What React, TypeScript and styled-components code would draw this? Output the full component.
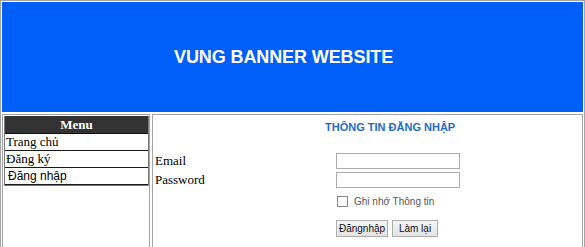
import React from 'react';
import styled, { createGlobalStyle } from 'styled-components';

const GlobalStyle = createGlobalStyle`
  html, body {
    margin: 0;
    padding: 0;
    background: #ffffff;
  }
  body {
    font-family: "Liberation Serif", "Times New Roman", serif;
  }
`;

const Page = styled.div`
  box-sizing: border-box;
  width: 585px;
  height: 247px;
  overflow: hidden;
  border: 1px solid #a3a3a3;
  border-bottom: none;
  padding: 1px 1px 0 1px;
`;

const Banner = styled.div`
  height: 110px;
  background: #005ef9;
  display: flex;
  align-items: center;
  padding-left: 172px;
  color: #ffffff;
  font-family: "Liberation Sans", Arial, sans-serif;
  font-weight: bold;
  font-size: 18px;
  letter-spacing: -0.1px;
`;

const Body = styled.div`
  display: flex;
  gap: 2px;
  margin-top: 2px;
  height: 140px;
`;

const SideCell = styled.div`
  box-sizing: border-box;
  width: 148px;
  border: 1px solid #a3a3a3;
  border-bottom: none;
  padding: 1px 0 0 1px;
`;

const Menu = styled.div`
  border: 1px solid #7a7a7a;
  border-top: none;
  width: 145px;
  box-sizing: border-box;
`;

const MenuHeader = styled.div`
  height: 17px;
  line-height: 17px;
  background: #333333;
  color: #ffffff;
  text-align: center;
  font-weight: bold;
  font-size: 13px;
  border-bottom: 1px solid #111;
`;

const MenuItem = styled.div<{ $sans?: boolean }>`
  height: 16px;
  line-height: 16px;
  padding-left: ${p => (p.$sans ? '3px' : '1px')};
  border-bottom: 1px solid #1a1a1a;
  color: #000;
  font-size: ${p => (p.$sans ? '12px' : '13px')};
  font-family: ${p => (p.$sans ? '"Liberation Sans", Arial, sans-serif' : '"Liberation Serif", "Times New Roman", serif')};
`;

const MainCell = styled.div`
  box-sizing: border-box;
  flex: 1;
  border: 1px solid #a3a3a3;
  border-bottom: none;
`;

const Title = styled.div`
  margin: 6px 0 0 172px;
  height: 13px;
  line-height: 13px;
  color: #1f6ad0;
  font-family: "Liberation Sans", Arial, sans-serif;
  font-weight: bold;
  font-size: 11px;
`;

const Form = styled.div`
  display: grid;
  grid-template-columns: 183px 1fr;
  row-gap: 1px;
  margin-top: 18px;
  align-items: center;
`;

const Label = styled.label`
  padding-left: 2px;
  line-height: 18px;
  font-size: 13px;
  color: #000;
`;

const Input = styled.input`
  box-sizing: border-box;
  width: 124px;
  height: 16px;
  margin: 0;
  border: 1px solid #ababab;
  background: #fff;
  padding: 0 2px;
`;

const CheckRow = styled.div`
  grid-column: 2;
  display: flex;
  align-items: center;
  gap: 6px;
  margin-top: 6px;
  font-family: "Liberation Sans", Arial, sans-serif;
  font-size: 10px;
  color: #555;
`;

const CheckBox = styled.span`
  display: inline-block;
  box-sizing: border-box;
  width: 11px;
  height: 11px;
  border: 1px solid #8a8a8a;
  background: #fff;
  margin-left: 1px;
`;

const ButtonRow = styled.div`
  grid-column: 2;
  display: flex;
  gap: 4px;
  margin-top: 12px;
`;

const Button = styled.button<{ $w: number }>`
  box-sizing: border-box;
  width: ${p => p.$w}px;
  height: 17px;
  padding: 0;
  margin: 0;
  border: 1px solid #adadad;
  background: linear-gradient(#f6f6f6, #e3e3e3);
  font-family: "Liberation Sans", Arial, sans-serif;
  font-size: 10px;
  color: #111;
`;

const Spacer = styled.div``;

export default function App() {
  return (
    <>
      <GlobalStyle />
      <Page>
        <Banner>VUNG BANNER WEBSITE</Banner>
        <Body>
          <SideCell>
            <Menu>
              <MenuHeader>Menu</MenuHeader>
              <MenuItem>Trang chủ</MenuItem>
              <MenuItem>Đăng ký</MenuItem>
              <MenuItem $sans>Đăng nhập</MenuItem>
            </Menu>
          </SideCell>
          <MainCell>
            <Title>THÔNG TIN ĐĂNG NHẬP</Title>
            <Form>
              <Label>Email</Label>
              <Input type="text" />
              <Label>Password</Label>
              <Input type="password" />
              <Spacer />
              <CheckRow>
                <CheckBox />
                Ghi nhớ Thông tin
              </CheckRow>
              <Spacer />
              <ButtonRow>
                <Button $w={52}>Đăngnhập</Button>
                <Button $w={46}>Làm lại</Button>
              </ButtonRow>
            </Form>
          </MainCell>
        </Body>
      </Page>
    </>
  );
}
